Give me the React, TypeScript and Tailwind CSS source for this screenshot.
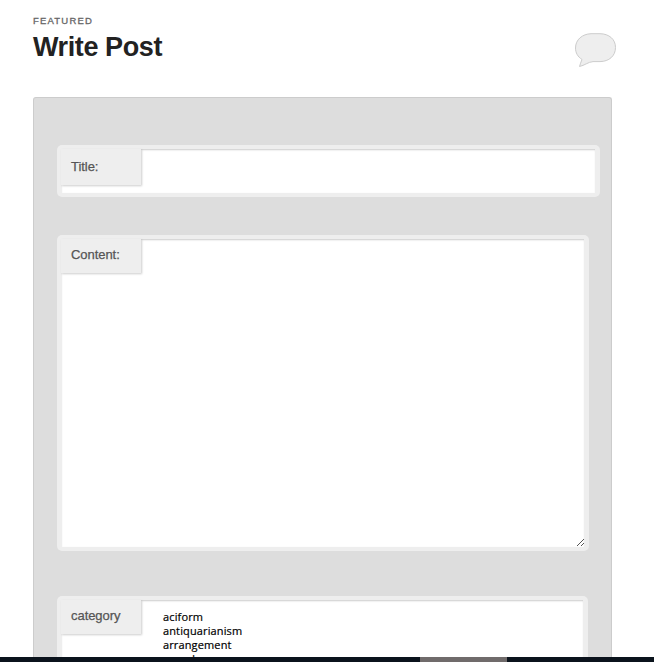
import type { ReactNode } from 'react';

const words = ['aciform', 'antiquarianism', 'arrangement', 'asouda'];

function Label({ children, className }: { children: ReactNode; className: string }) {
  return (
    <div
      className={`absolute left-1 top-1 w-20 bg-[#eee] pl-[10px] text-[13px] leading-4 tracking-[-0.05px] text-[#555] shadow-[1px_1px_2px_rgba(0,0,0,0.2)] [-webkit-text-stroke:0.25px_#555] ${className}`}
    >
      {children}
    </div>
  );
}

function Field({ label, labelClass, className, children }: { label: string; labelClass: string; className: string; children?: ReactNode }) {
  return (
    <div className={`relative shrink-0 rounded-[5px] bg-[#eee] px-[5px] pb-1 pt-1 ${className}`}>
      <div className="relative h-full overflow-hidden bg-white shadow-[inset_0_2px_2px_-1px_rgba(0,0,0,0.2),inset_0_0_1px_rgba(0,0,0,0.08)]">{children}</div>
      <Label className={labelClass}>{label}</Label>
    </div>
  );
}

export default function App() {
  return (
    <div className="flex h-[662px] w-[654px] flex-col overflow-hidden bg-white font-['Liberation_Sans',sans-serif]">
      <header className="flex h-[97px] shrink-0 justify-between pl-[33px] pr-[37px]">
        <div className="pt-[15px]">
          <p className="text-[9.5px] leading-3 tracking-[1.2px] text-[#666] [-webkit-text-stroke:0.3px_#666]">FEATURED</p>
          <h1 className="mt-1 text-[27px] font-bold leading-8 tracking-[-0.4px] text-[#222]">Write Post</h1>
        </div>
        <svg className="mt-[32px]" width="43" height="37" viewBox="0 0 43 37">
          <path d="M8 27.5C3.7 24.7 1.5 20.8 1.5 16C1.5 7.5 8.5 2 17 1.7H26C35 1.8 41.5 7.2 41.5 15.5C41.5 24 35 29.5 26 29.6H19C14 30 10.5 33.5 5.5 34.5C6.3 32.3 6.7 30.2 8 27.5Z" fill="#eee" stroke="#ccc" />
        </svg>
      </header>
      <main className="ml-[33px] flex h-[560px] w-[579px] shrink-0 flex-col overflow-hidden rounded-t-[3px] border border-b-0 border-[#ccc] bg-[#ddd] pl-[23px] pt-[47px]">
        <Field label="Title:" labelClass="h-9 pt-[10px]" className="h-[52px] w-[543px]" />
        <Field label="Content:" labelClass="h-[34px] pt-2" className="mt-[38px] h-[316px] w-[532px]">
          <svg className="absolute bottom-0 right-0" width="8" height="9" viewBox="0 0 8 9" shapeRendering="crispEdges">
            <path d="M1 8L8 1M5 8L8 5" stroke="#555" />
          </svg>
        </Field>
        <Field label="category" labelClass="h-[34px] pt-2" className="mt-[45px] h-[120px] w-[531px]">
          <ul className="pl-[101px] pt-[10px] font-['Open_Sans',sans-serif] text-[11px] leading-[14px] tracking-[0.13px] text-black [-webkit-text-stroke:0.2px_#000]">
            {words.map((word) => (
              <li key={word}>{word}</li>
            ))}
          </ul>
        </Field>
      </main>
      <footer className="flex h-[5px] shrink-0 bg-[#0b131c]">
        <div className="ml-[420px] w-[87px] bg-[#706b6b]" />
      </footer>
    </div>
  );
}
